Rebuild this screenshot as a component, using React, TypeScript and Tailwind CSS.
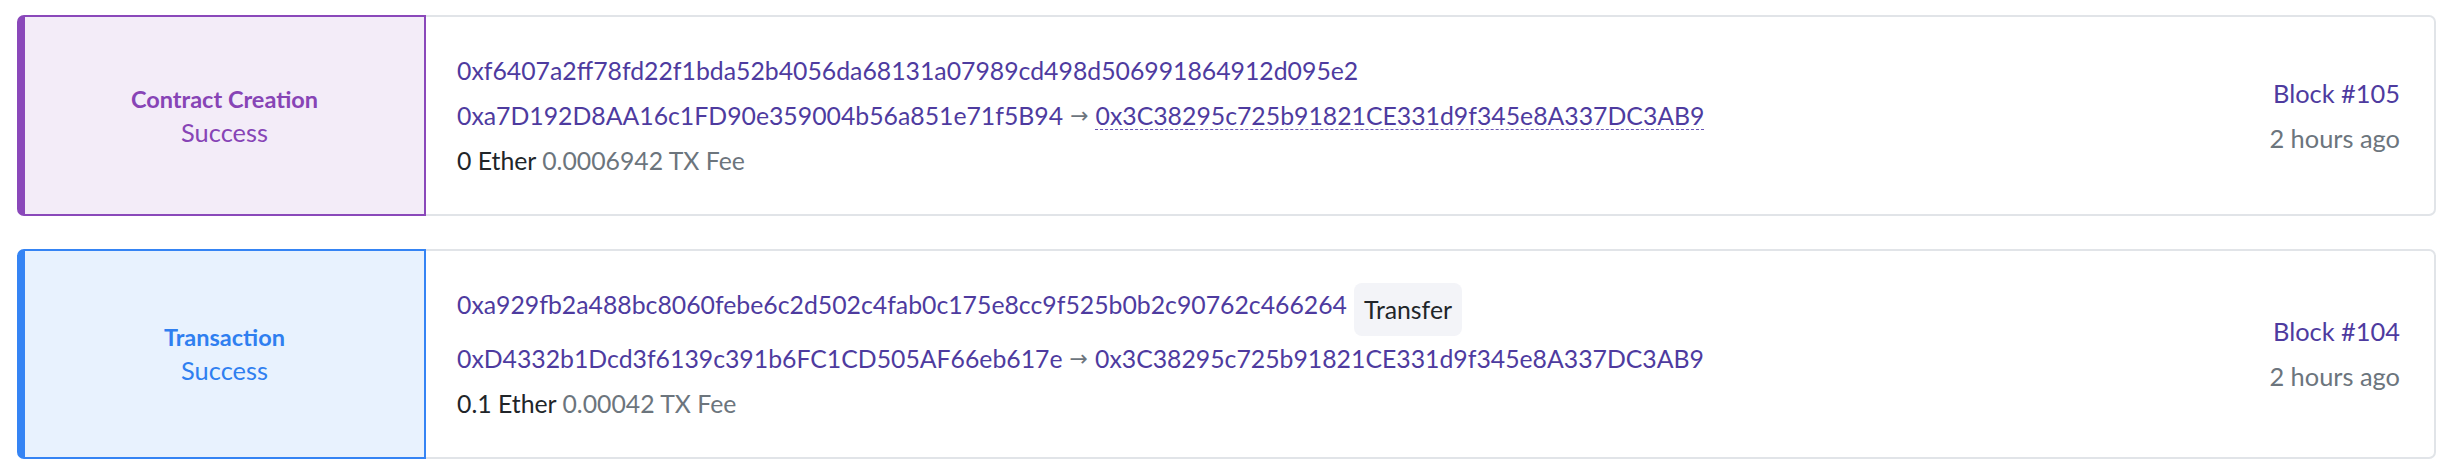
import React from "react";

type Tx = {
  kind: string;
  tone: "purple" | "blue";
  hash: string;
  badge?: string;
  from: string;
  to: string;
  toUnderline: boolean;
  value: string;
  fee: string;
  block: string;
  age: string;
};

const txs: Tx[] = [
  {
    kind: "Contract Creation",
    tone: "purple",
    hash: "0xf6407a2ff78fd22f1bda52b4056da68131a07989cd498d506991864912d095e2",
    from: "0xa7D192D8AA16c1FD90e359004b56a851e71f5B94",
    to: "0x3C38295c725b91821CE331d9f345e8A337DC3AB9",
    toUnderline: true,
    value: "0 Ether",
    fee: "0.0006942 TX Fee",
    block: "Block #105",
    age: "2 hours ago",
  },
  {
    kind: "Transaction",
    tone: "blue",
    hash: "0xa929fb2a488bc8060febe6c2d502c4fab0c175e8cc9f525b0b2c90762c466264",
    badge: "Transfer",
    from: "0xD4332b1Dcd3f6139c391b6FC1CD505AF66eb617e",
    to: "0x3C38295c725b91821CE331d9f345e8A337DC3AB9",
    toUnderline: false,
    value: "0.1 Ether",
    fee: "0.00042 TX Fee",
    block: "Block #104",
    age: "2 hours ago",
  },
];

function Card({ tx }: { tx: Tx }) {
  const panel =
    tx.tone === "purple"
      ? "border-[#8a48ba] bg-[#f3ecf8] text-[#8744b6]"
      : "border-[#3584f4] bg-[#e8f2fe] text-[#2f7ff0]";
  return (
    <div className="flex">
      <div
        className={`w-[409px] shrink-0 flex flex-col items-center justify-center border-2 border-l-[8px] rounded-l-[7px] ${panel}`}
      >
        <div className="font-bold text-[23.5px] leading-[33px]">{tx.kind}</div>
        <div className="text-[25.4px] leading-[33px]">Success</div>
      </div>
      <div className="flex-1 flex items-center border-2 border-l-0 border-[#e1e4e8] rounded-r-[7px] pl-[31px] pr-[34px] py-[37px]">
        <div className="flex-1 flex flex-col gap-[12px]">
          <div className="flex items-start gap-[7px]">
            <span className="text-[#4e3b9f] leading-[33px]">{tx.hash}</span>
            {tx.badge && (
              <span className="h-[53px] -mt-[5px] -mb-[6px] px-[10px] flex items-center rounded-[8px] bg-[#f3f4f8] text-[#212529]">
                {tx.badge}
              </span>
            )}
          </div>
          <div className="leading-[33px] flex items-center">
            <span className="text-[#4e3b9f]">{tx.from}</span>
            <span className="mx-[7px] text-[#6c757d] text-[22px] font-['DejaVu_Sans',sans-serif]">
              →
            </span>
            <span
              className={`text-[#4e3b9f] ${
                tx.toUnderline
                  ? "underline decoration-dashed decoration-[#6a56b5] decoration-1 underline-offset-[4px]"
                  : ""
              }`}
            >
              {tx.to}
            </span>
          </div>
          <div className="leading-[33px]">
            <span className="text-[#212529]">{tx.value}</span>{" "}
            <span className="text-[#6c757d]">{tx.fee}</span>
          </div>
        </div>
        <div className="flex flex-col items-end gap-[12px]">
          <div className="leading-[33px] text-[#4e3b9f] text-[25.4px]">{tx.block}</div>
          <div className="leading-[33px] text-[#6c757d] text-[25.4px]">{tx.age}</div>
        </div>
      </div>
    </div>
  );
}

export default function App() {
  return (
    <div className="min-h-[472px] bg-white pl-[17px] pr-[14px] pt-[15px] flex flex-col gap-[33px] text-[24.8px] font-['Lato',sans-serif]">
      {txs.map((tx) => (
        <Card key={tx.hash} tx={tx} />
      ))}
    </div>
  );
}
